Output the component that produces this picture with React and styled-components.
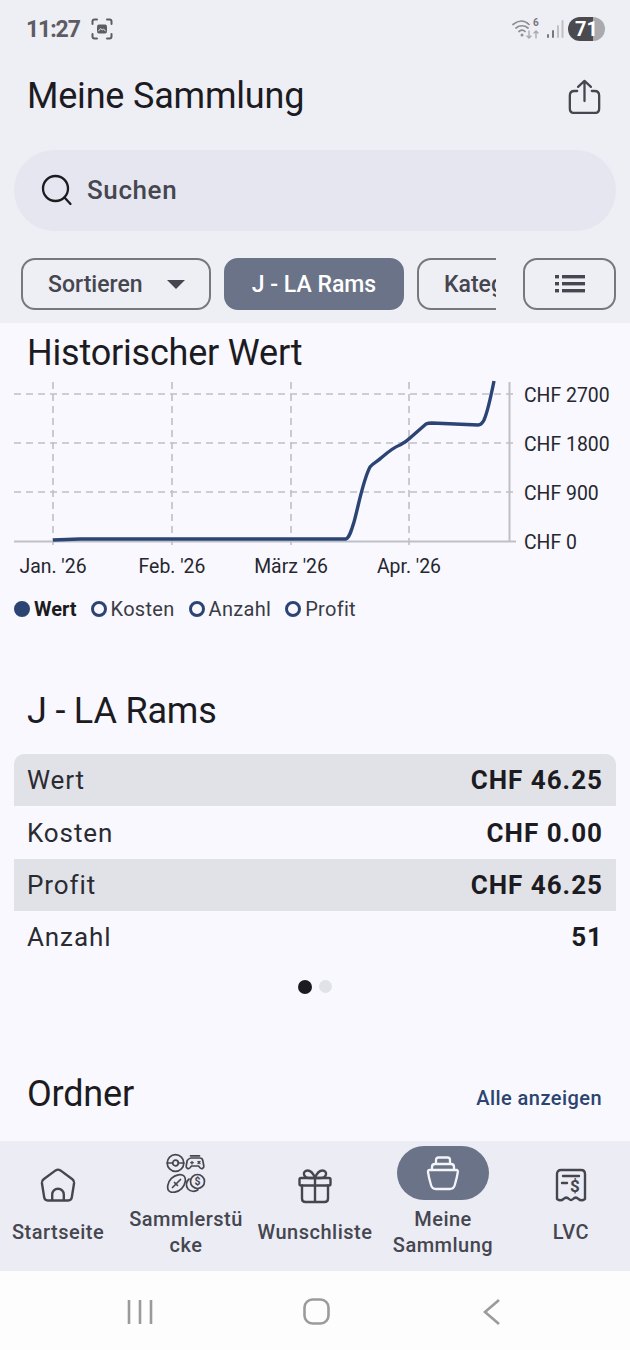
import React from "react";
import styled, { createGlobalStyle } from "styled-components";

const Global = createGlobalStyle`
  html, body { margin: 0; padding: 0; background: #eeeef5; }
  * { box-sizing: border-box; }
  body { font-family: Roboto, "Noto Sans", sans-serif; }
`;

const Page = styled.div`
  width: 630px; height: 1350px; display: flex; flex-direction: column;
  overflow: hidden; background: #eeeef5; color: #1b1b21;
`;
const Head = styled.header`
  flex: none; height: 323px; background: #eeeef5; display: flex; flex-direction: column;
`;
const StatusBar = styled.div`
  height: 58px; padding: 0 25px 0 26px; display: flex; align-items: center; justify-content: space-between;
`;
const StatusGroup = styled.div`
  display: flex; align-items: center; gap: ${p => p.$gap || 10}px;
`;
const Clock = styled.span`
  font-size: 23px; font-weight: 700; color: #5c5c62; letter-spacing: -1.1px;
`;
const Battery = styled.div`
  width: 37px; height: 24px; border-radius: 12px; display: flex; align-items: center; justify-content: center;
  background: linear-gradient(90deg, #4a4a4f 0 68%, #a9a9ae 68% 100%);
  color: #fff; font-size: 20px; font-weight: 700;
`;
const TitleRow = styled.div`
  height: 76px; padding: 0 29px 0 27px; display: flex; align-items: center; justify-content: space-between;
`;
const PageTitle = styled.h1`
  margin: 0; font-size: 36px; font-weight: 400; line-height: 44px; color: #1b1b21; letter-spacing: -0.2px;
`;
const Search = styled.div`
  margin: 16px 14px 0; height: 81px; border-radius: 41px; background: #e6e6f0; padding-bottom: 2px;
  display: flex; align-items: center; gap: 14px; padding-left: 27px;
`;
const SearchText = styled.span`
  font-size: 26px; font-weight: 500; color: #45464f; letter-spacing: 0.6px;
`;
const Filters = styled.div`
  margin-top: 27px; height: 52px; padding: 0 14px 0 21px; display: flex; align-items: stretch; gap: 27px;
`;
const ChipScroller = styled.div`
  flex: 1; min-width: 0; overflow: hidden; display: flex; gap: 13px;
`;
const Chip = styled.div`
  flex: none; width: ${p => p.$w}px; height: 52px; border-radius: 14px;
  display: flex; align-items: center; justify-content: ${p => p.$between ? "space-between" : "center"};
  padding: ${p => p.$between ? "0 24px 0 25px" : "0"};
  border: 2px solid ${p => p.$active ? "#6b7388" : "#77787f"};
  background: ${p => p.$active ? "#6b7388" : "transparent"};
  color: ${p => p.$active ? "#fff" : "#45464f"};
  font-size: 23px; font-weight: 500; white-space: nowrap;
`;
const ClippedLabel = styled.span`
  align-self: center; margin-left: 25px; margin-right: auto;
`;
const ListButton = styled.div`
  flex: none; width: 93px; height: 52px; border-radius: 14px; border: 2px solid #77787f;
  display: flex; align-items: center; justify-content: center;
`;
const Main = styled.main`
  flex: 1; min-height: 0; overflow: hidden; background: #f8f8fe; display: flex; flex-direction: column;
`;
const SectionTitle = styled.h2`
  margin: ${p => p.$top}px 0 0 27px; font-size: 36px; font-weight: 400; line-height: 44px; color: #1b1b21; letter-spacing: -0.2px;
`;
const ChartSvg = styled.svg`
  display: block; flex: none; width: 630px; height: 209px;
`;
const Legend = styled.div`
  margin-top: 12px; padding-left: 14px; height: 26px; display: flex; align-items: center; gap: 14px;
  font-size: 20px; line-height: 26px; color: #30313a;
`;
const LegendItem = styled.div`
  display: flex; align-items: center; gap: 4px; font-weight: ${p => p.$on ? 700 : 400};
  letter-spacing: ${p => p.$on ? 0 : 0.3}px; color: ${p => p.$on ? "#1b1b21" : "#3a3b44"};
`;
const LegendDot = styled.span`
  width: 16px; height: 16px; border-radius: 50%; border: 3.5px solid #2b4474;
  background: ${p => p.$on ? "#2b4474" : "#f8f8fe"};
`;
const Table = styled.div`
  margin: 21px 14px 0; display: flex; flex-direction: column;
`;
const Row = styled.div`
  height: ${p => p.$h}px; padding: 0 13px; display: flex; align-items: center; justify-content: space-between;
  background: ${p => p.$shade ? "#e1e2e7" : "transparent"};
  border-radius: ${p => p.$first ? "10px 10px 0 0" : "0"};
  font-size: 26px; letter-spacing: 0.9px; color: #2a2b32;
`;
const RowValue = styled.span`
  font-weight: 700; color: #1b1b21; letter-spacing: 1px;
`;
const Pager = styled.div`
  margin-top: 16px; height: 15px; display: flex; align-items: center; justify-content: center; gap: 7px;
`;
const PagerDot = styled.span`
  width: ${p => p.$on ? 14 : 13}px; height: ${p => p.$on ? 14 : 13}px; border-radius: 50%;
  background: ${p => p.$on ? "#1b1b21" : "#e1e2e7"};
`;
const SectionHead = styled.div`
  margin-top: 78px; padding: 0 28px 0 0; display: flex; align-items: center; justify-content: space-between;
`;
const SeeAll = styled.span`
  font-size: 20px; font-weight: 500; color: #2b4470; letter-spacing: 0.45px; margin-top: 8px;
`;
const NavBar = styled.nav`
  flex: none; height: 130px; background: #ececf4; padding: 0 0 8px 0;
  display: grid; grid-template-columns: 116px 140px 118px 138px 118px; align-items: center;
`;
const NavItem = styled.div`
  display: flex; flex-direction: column; align-items: center; gap: 6px; min-width: 0;
`;
const IconPill = styled.div`
  width: 92px; height: 54px; border-radius: 27px; display: flex; align-items: center; justify-content: center;
  background: ${p => p.$on ? "#6b7388" : "transparent"};
`;
const NavLabel = styled.div`
  width: 118px; text-align: center; font-size: 20px; font-weight: 500; line-height: 26px;
  color: #45464f; letter-spacing: 0.5px; overflow-wrap: anywhere;
`;
const SystemBar = styled.div`
  flex: none; height: 79px; background: #fdfdfd; padding: 2px 50px 0 52px;
  display: grid; grid-template-columns: repeat(3, 176px); justify-items: center; align-items: center;
`;

const ChartLine = "M53 540 L80 539 L346 539 C349 538 351 532 354 522 C358 508 363 480 370 467 C373 463 377 462 381 458 C388 452 394 447 400 445 C404 443 407 441 410 438 L426 424 C428 423 430 423 432 423 L478 425 C480 425 482 424 484 420 C488 411 491 396 494 381";

const hLines = [394, 443, 492];
const vLines = [53, 172, 291, 409];
const yLabels = [["CHF 2700", 394], ["CHF 1800", 443], ["CHF 900", 492], ["CHF 0", 541]];
const xLabels = [["Jan. '26", 53], ["Feb. '26", 172], ["März '26", 291], ["Apr. '26", 409]];

const Chart = () => (
  <ChartSvg viewBox="0 375 630 209">
    <g stroke="#bfc0c7" strokeWidth="1.6" fill="none">
      {hLines.map(y => <path key={y} d={`M14 ${y}H516`} strokeDasharray="7 5" />)}
      {vLines.map(x => <path key={x} d={`M${x} 382V548`} strokeDasharray="7 5" />)}
      <path d="M14 541.5H516" strokeWidth="2" />
      <path d="M509.5 382V541" strokeWidth="2" />
    </g>
    <path d={ChartLine} fill="none" stroke="#2b4474" strokeWidth="3.4" strokeLinejoin="round" />
    <g fontFamily="Roboto, sans-serif" fontSize="19.4" fill="#26272e">
      {yLabels.map(([t, y]) => <text key={t} x="524" y={y + 8}>{t}</text>)}
      {xLabels.map(([t, x]) => <text key={t} x={x} y="573" textAnchor="middle">{t}</text>)}
    </g>
  </ChartSvg>
);

const HomeIcon = () => (
  <svg width="38" height="38" viewBox="0 0 38 38" fill="none" stroke="#45464f" strokeWidth="2.4" strokeLinejoin="round">
    <path d="M16.6 3.4 4.6 12.2c-1.3 1-1.9 2.2-1.7 3.8l2.3 14.4c.3 2 1.6 3.1 3.5 3.1h20.6c1.9 0 3.2-1.1 3.5-3.1L35.1 16c.2-1.6-.4-2.8-1.7-3.8l-12-8.8c-1.5-1-3.3-1-4.8 0Z" />
    <path d="M13.2 33.5v-6a5.8 5.8 0 0 1 11.6 0v6" />
  </svg>
);

const CollectIcon = () => (
  <svg width="40" height="40" viewBox="0 0 40 40" fill="none" stroke="#45464f" strokeWidth="1.7" strokeLinecap="round" strokeLinejoin="round">
    <circle cx="9.5" cy="10" r="8.3" />
    <path d="M1.300 10h5.400M12.300 10h5.400" />
    <circle cx="9.5" cy="10" r="2.8" />
    <path d="M24.500 2.800h9M25 5h9c1.500 0 2.500 1 2.800 2.500l1 5.500c.4 2.200-2.300 3.500-3.800 1.800l-1.500-1.800h-7l-1.500 1.800c-1.500 1.700-4.200.4-3.800-1.800l1-5.500C22.500 6 23.500 5 25 5Z" />
    <path d="M26 8.500v2.500M24.700 9.700h2.600M32 8.500l2 2M34 8.500l-2 2" strokeWidth="1.300" />
    <path d="M3 38c-2.400-2.400-1.600-8.600 2.400-12.600S15.600 20.600 18 23c2.400 2.400 1.600 8.600-2.400 12.600S5.400 40.400 3 38Z" />
    <path d="M6.500 34.500 14.500 26.500M8.500 29.500l3 3" />
    <circle cx="31.500" cy="28.500" r="7" />
    <path d="M23 26c-3 2.500-3.500 7-1 10 2.500 2.800 7 3 10 .8" />
    <text x="31.500" y="32.300" fontFamily="Roboto, sans-serif" fontSize="10.500" fontWeight="700" fill="#45464f" stroke="none" textAnchor="middle">$</text>
  </svg>
);

const GiftIcon = () => (
  <svg width="34" height="36" viewBox="0 0 34 36" fill="none" stroke="#45464f" strokeWidth="2.400" strokeLinejoin="round" strokeLinecap="round">
    <rect x="1.500" y="10" width="31" height="7.500" rx="1.500" />
    <path d="M4 17.500V30.500c0 2 1.300 3.500 3.500 3.500h19c2.200 0 3.500-1.500 3.500-3.500V17.500M17 10v24" />
    <path d="M17 10c-1.500-4-4.500-7.500-7.500-7.500-2.500 0-4 1.800-3.500 4 .5 2.300 3 3.500 6 3.500h5ZM17 10c1.500-4 4.500-7.500 7.500-7.500 2.500 0 4 1.800 3.500 4-.5 2.300-3 3.500-6 3.500h-5Z" />
  </svg>
);

const BasketIcon = () => (
  <svg width="34" height="36" viewBox="0 0 34 36" fill="none" stroke="#f4f5f8" strokeWidth="2.300" strokeLinecap="round" strokeLinejoin="round">
    <path d="M10 8V5c0-1.500 1-2.500 2.500-2.500h9c1.500 0 2.500 1 2.500 2.500v3" />
    <path d="M6 14v-2c0-1.800 1.200-3 3-3h16c1.800 0 3 1.200 3 3v2" />
    <path d="M3.500 15h27c1 0 1.500.8 1.300 2-.5 4-1.800 9-3 13-.7 2.600-2.500 4-5 4H10c-2.500 0-4.300-1.400-5-4-1.200-4-2.500-9-3-13-.2-1.200.3-2 1.500-2Z" />
  </svg>
);

const ReceiptIcon = () => (
  <svg width="32" height="36" viewBox="0 0 32 36" fill="none" stroke="#45464f" strokeWidth="2.400" strokeLinecap="round" strokeLinejoin="round">
    <path d="M2 31V6c0-2.500 1.500-4 4-4h20c2.500 0 4 1.500 4 4v25c-2.500 1.800-4.500 1.800-6.500 0-2-2-3.500-2-5.500 0-1.500 1.500-2.500 1.500-4 0-2-2-3.500-2-5.500 0-2 1.800-4 1.800-6.500 0Z" />
    <path d="M8 8h16M7 15h5" />
    <text x="20" y="24" fontFamily="Roboto, sans-serif" fontSize="17" fontWeight="700" fill="#45464f" stroke="none" textAnchor="middle">$</text>
  </svg>
);

const nav = [
  { label: "Startseite", icon: <HomeIcon /> },
  { label: "Sammlerstücke", icon: <CollectIcon /> },
  { label: "Wunschliste", icon: <GiftIcon /> },
  { label: "Meine Sammlung", icon: <BasketIcon />, on: true },
  { label: "LVC", icon: <ReceiptIcon /> },
];

const rows = [
  ["Wert", "CHF 46.25", true, 52],
  ["Kosten", "CHF 0.00", false, 53],
  ["Profit", "CHF 46.25", true, 52],
  ["Anzahl", "51", false, 52],
];

export default function App() {
  return (
    <Page>
      <Global />
      <Head>
        <StatusBar>
          <StatusGroup $gap={11}>
            <Clock>11:27</Clock>
            <svg width="22" height="22" viewBox="0 0 22 22" fill="none" stroke="#5c5c62" strokeWidth="2" strokeLinecap="round">
              <path d="M1.500 6V3.500c0-1.200.8-2 2-2H6M16 1.500h2.500c1.200 0 2 .8 2 2V6M20.500 16v2.500c0 1.200-.8 2-2 2H16M6 20.500H3.500c-1.200 0-2-.8-2-2V16" />
              <rect x="6" y="6.500" width="10" height="9" rx="2" fill="#5c5c62" stroke="none" />
              <path d="M7.500 13l2.200-2.500 1.500 1.500 1.300-1 2 2" stroke="#eeeef5" strokeWidth="1" />
            </svg>
          </StatusGroup>
          <StatusGroup $gap={4}>
            <svg width="30" height="24" viewBox="0 0 30 24" fill="none" stroke="#8d8d93" strokeWidth="1.700" strokeLinecap="round">
              <path d="M1 7.500c5.500-4.500 11.500-4.500 16 0M4 11c3.500-3 8.500-3 12 0M7 14.500c2-1.500 4.500-1.500 6 0" />
              <circle cx="10" cy="18" r="1.500" fill="#8d8d93" stroke="none" />
              <text x="21" y="9" fontFamily="Roboto, sans-serif" fontSize="10" fontWeight="700" fill="#77777d" stroke="none">6</text>
              <path d="M17 14v7M15 19l2 2 2-2M24 21v-7M22 16l2-2 2 2" strokeWidth="1.300" stroke="#a6a6ab" />
            </svg>
            <svg width="18" height="20" viewBox="0 0 18 20" fill="none" strokeWidth="2" strokeLinecap="round">
              <path d="M2 18v-2" stroke="#77777d" />
              <path d="M7 18v-6" stroke="#77777d" />
              <path d="M12 18V7M16.500 18V2" stroke="#c0c0c5" />
            </svg>
            <Battery>71</Battery>
          </StatusGroup>
        </StatusBar>
        <TitleRow>
          <PageTitle>Meine Sammlung</PageTitle>
          <svg width="33" height="35" viewBox="0 0 36 38" fill="none" stroke="#45464f" strokeWidth="2.500" strokeLinecap="round" strokeLinejoin="round">
            <path d="M18 24V2M11 8.500 18 2l7 6.500" />
            <path d="M10 13H7c-3 0-5 2-5 5v14c0 3 2 5 5 5h22c3 0 5-2 5-5V18c0-3-2-5-5-5h-3" />
          </svg>
        </TitleRow>
        <Search>
          <svg width="32" height="32" viewBox="0 0 32 32" fill="none" stroke="#1b1b21" strokeWidth="2.300" strokeLinecap="round">
            <circle cx="14.500" cy="14.500" r="12.500" />
            <path d="M23.500 23.500 29.500 30" />
          </svg>
          <SearchText>Suchen</SearchText>
        </Search>
        <Filters>
          <ChipScroller>
            <Chip $w={190} $between>
              Sortieren
              <svg width="18" height="9" viewBox="0 0 18 9"><path d="M0 0h18L9 9Z" fill="#45464f" /></svg>
            </Chip>
            <Chip $w={180} $active>J - LA Rams</Chip>
            <Chip $w={150}><ClippedLabel>Kategorie</ClippedLabel></Chip>
          </ChipScroller>
          <ListButton>
            <svg width="30" height="18" viewBox="0 0 30 18" fill="#45464f">
              <rect x="0" y="0" width="4" height="3.400" />
              <rect x="7" y="0" width="23" height="3.400" />
              <rect x="0" y="7" width="4" height="3.400" />
              <rect x="7" y="7" width="23" height="3.400" />
              <rect x="0" y="14" width="4" height="3.400" />
              <rect x="7" y="14" width="23" height="3.400" />
            </svg>
          </ListButton>
        </Filters>
      </Head>
      <Main>
        <SectionTitle $top={8}>Historischer Wert</SectionTitle>
        <Chart />
        <Legend>
          <LegendItem $on><LegendDot $on />Wert</LegendItem>
          <LegendItem><LegendDot />Kosten</LegendItem>
          <LegendItem><LegendDot />Anzahl</LegendItem>
          <LegendItem><LegendDot />Profit</LegendItem>
        </Legend>
        <SectionTitle $top={67}>J - LA Rams</SectionTitle>
        <Table>
          {rows.map(([k, v, shade, h], i) => (
            <Row key={k} $shade={shade} $h={h} $first={i === 0}>
              {k}<RowValue>{v}</RowValue>
            </Row>
          ))}
        </Table>
        <Pager><PagerDot $on /><PagerDot /></Pager>
        <SectionHead>
          <SectionTitle $top={0}>Ordner</SectionTitle>
          <SeeAll>Alle anzeigen</SeeAll>
        </SectionHead>
      </Main>
      <NavBar>
        {nav.map(n => (
          <NavItem key={n.label}>
            <IconPill $on={n.on}>{n.icon}</IconPill>
            <NavLabel>{n.label}</NavLabel>
          </NavItem>
        ))}
      </NavBar>
      <SystemBar>
        <svg width="26" height="26" viewBox="0 0 26 26" fill="none" stroke="#9b9b9d" strokeWidth="2.600">
          <path d="M2 1v24M13 1v24M24 1v24" />
        </svg>
        <svg width="27" height="27" viewBox="0 0 27 27" fill="none" stroke="#9b9b9d" strokeWidth="2.600">
          <rect x="1.500" y="1.500" width="24" height="24" rx="8" />
        </svg>
        <svg width="20" height="28" viewBox="0 0 20 28" fill="none" stroke="#9b9b9d" strokeWidth="2.600">
          <path d="M17 2 3 14l14 12" />
        </svg>
      </SystemBar>
    </Page>
  );
}
